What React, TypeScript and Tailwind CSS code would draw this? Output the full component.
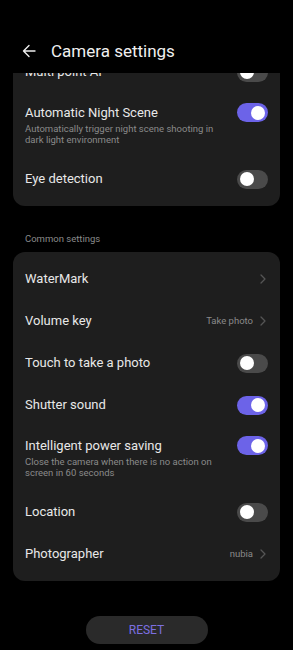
import React from "react";

function Toggle({ on }: { on: boolean }) {
  return (
    <div
      className={
        "relative h-[19px] w-[31px] shrink-0 rounded-full " +
        (on ? "bg-[#6c63e8]" : "bg-[#4a4a4a]")
      }
    >
      <div
        className={
          "absolute top-[2.5px] h-[14px] w-[14px] rounded-full bg-white " +
          (on ? "right-[3px]" : "left-[3px]")
        }
      />
    </div>
  );
}

function Chevron() {
  return (
    <svg width="6" height="10" viewBox="0 0 6 10" className="shrink-0">
      <path d="M1 1l4 4-4 4" fill="none" stroke="#555" strokeWidth="1.3" strokeLinecap="round" strokeLinejoin="round" />
    </svg>
  );
}

function Row({
  title,
  sub,
  on,
  value,
  link,
}: {
  title: string;
  sub?: string;
  on?: boolean;
  value?: string;
  link?: boolean;
}) {
  if (sub) {
    return (
      <div className="flex h-[65px] items-start justify-between pl-3 pr-3">
        <div className="pt-[12px] pr-5">
          <div className="text-[13px] leading-4 text-[#e8e8e8]">{title}</div>
          <div className="mt-[2px] text-[9.5px] leading-[11px] text-[#8a8a8a]">{sub}</div>
        </div>
        <div className="pt-[10px]">
          <Toggle on={!!on} />
        </div>
      </div>
    );
  }
  return (
    <div className="flex h-[42px] items-center justify-between pl-3 pr-3">
      <div className="text-[13px] leading-4 text-[#e8e8e8]">{title}</div>
      {link ? (
        <div className="flex items-center gap-[7px] pr-[2px]">
          {value && <span className="text-[9.5px] text-[#8a8a8a]">{value}</span>}
          <Chevron />
        </div>
      ) : (
        <Toggle on={!!on} />
      )}
    </div>
  );
}

export default function App() {
  return (
    <div
      className="flex h-[650px] w-[293px] flex-col overflow-hidden bg-black"
      style={{ fontFamily: "Roboto, 'Noto Sans', sans-serif" }}
    >
      <div className="relative z-10 flex h-[73px] shrink-0 items-end bg-black pb-[12px]">
        <svg width="14" height="14" viewBox="0 0 14 14" className="ml-[22px] mb-[3px]">
          <path d="M13 7H1.5M7 1.5L1.5 7 7 12.5" fill="none" stroke="#eee" strokeWidth="1.4" strokeLinecap="round" strokeLinejoin="round" />
        </svg>
        <div className="ml-[15px] text-[17px] leading-5 text-[#f0f0f0]">Camera settings</div>
      </div>
      <div className="flex-1 overflow-hidden">
        <div className="-mt-[28px] px-[13px]">
          <div className="rounded-[12px] bg-[#1e1e1e] py-[6px]">
            <Row title="Multi point AI" on={false} />
            <Row
              title="Automatic Night Scene"
              sub="Automatically trigger night scene shooting in dark light environment"
              on
            />
            <Row title="Eye detection" on={false} />
          </div>
          <div className="px-3 pt-[27px] pb-[8px] text-[9.5px] leading-[11px] text-[#8a8a8a]">
            Common settings
          </div>
          <div className="rounded-[12px] bg-[#1e1e1e] py-[6px]">
            <Row title="WaterMark" link />
            <Row title="Volume key" link value="Take photo" />
            <Row title="Touch to take a photo" on={false} />
            <Row title="Shutter sound" on />
            <Row
              title="Intelligent power saving"
              sub="Close the camera when there is no action on screen in 60 seconds"
              on
            />
            <Row title="Location" on={false} />
            <Row title="Photographer" link value="nubia" />
          </div>
          <div className="flex justify-center pt-[35px]">
            <div className="flex h-[28px] w-[122px] items-center justify-center rounded-full bg-[#2a2a2a] text-[12px] text-[#7c6fe0]">
              RESET
            </div>
          </div>
        </div>
      </div>
    </div>
  );
}
